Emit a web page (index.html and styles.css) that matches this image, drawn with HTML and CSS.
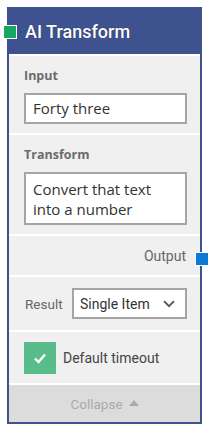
FILE: index.html
```html
<!DOCTYPE html>
<html>
<head>
<meta charset="utf-8">
<link rel="stylesheet" href="styles.css">
</head>
<body>
<div class="node">
  <span class="port port-in"></span>
  <div class="header">AI Transform</div>
  <div class="section field">
    <div class="label">Input</div>
    <div class="box box-input">Forty three</div>
  </div>
  <div class="section field">
    <div class="label">Transform</div>
    <div class="box box-area">Convert that text into a number</div>
  </div>
  <div class="section output">
    <span>Output</span>
    <span class="port port-out"></span>
  </div>
  <div class="section result">
    <span class="result-label">Result</span>
    <div class="select">
      <span>Single Item</span>
      <svg class="chev" width="12" height="8" viewBox="0 0 12 8"><path d="M1 1.2 L6 6.2 L11 1.2" fill="none" stroke="#555" stroke-width="1.8"/></svg>
    </div>
  </div>
  <div class="section check">
    <span class="checkbox"><svg width="14" height="12" viewBox="0 0 14 12"><path d="M2 6.5 L5.5 10 L12 2.5" fill="none" stroke="#fff" stroke-width="2.4"/></svg></span>
    <span class="check-label">Default timeout</span>
  </div>
  <div class="footer">Collapse <span class="tri"></span></div>
</div>
</body>
</html>
```
FILE: styles.css
```css
html, body {
  margin: 0;
  padding: 0;
  background: #fff;
}
body {
  width: 209px;
  height: 430px;
  overflow: hidden;
}
.node {
  position: relative;
  margin: 7px 0 0 7px;
  width: 191px;
  border: 2px solid #3e5290;
  background: #f0f0f0;
}
.header {
  height: 45px;
  background: #3e5290;
  color: #fff;
  font-family: Roboto, sans-serif;
  font-weight: 500;
  font-size: 18px;
  line-height: 45px;
  padding-left: 16px;
  margin-top: -2px;
  padding-top: 2px;
  text-shadow: 0 0 1px rgba(0,0,0,0.5);
}
.port {
  position: absolute;
  width: 12px;
  height: 12px;
  border: 1px solid #fff;
}
.port-in {
  left: -6px;
  top: 16px;
  background: #16a862;
}
.section {
  border-top: 2px solid #fff;
}
.field {
  padding: 9px 13px 9px 15px;
}
.label {
  font-family: "Open Sans", sans-serif;
  font-weight: 700;
  font-size: 12.5px;
  color: #6b6b6b;
  line-height: 22px;
  margin-bottom: 6px;
}
.box {
  background: #fff;
  border: 2px solid #a4a4a4;
  font-family: "Open Sans", sans-serif;
  font-size: 15px;
  color: #333;
  padding: 0 8px 0 7px;
}
.box-input {
  height: 27px;
  line-height: 27px;
}
.box-area {
  height: 44px;
  line-height: 20px;
  padding-top: 5px;
}
.output {
  position: relative;
  height: 39px;
  display: flex;
  align-items: center;
  justify-content: flex-end;
  padding-right: 14px;
  font-family: Roboto, sans-serif;
  font-size: 14px;
  color: #666;
}
.port-out {
  right: -9px;
  top: 16px;
  background: #0a7ad6;
}
.result {
  height: 53px;
  display: flex;
  align-items: center;
  padding-left: 16px;
  font-family: Roboto, sans-serif;
  font-size: 13.5px;
  color: #666;
}
.result-label {
  width: 47px;
}
.select {
  height: 27px;
  border: 2px solid #a4a4a4;
  background: #fff;
  display: flex;
  align-items: center;
  justify-content: space-between;
  padding: 0 10px 0 6px;
  width: 95px;
  font-size: 14px;
  color: #333;
}
.check {
  height: 51px;
  display: flex;
  align-items: center;
  padding-left: 15px;
}
.checkbox {
  width: 32px;
  height: 32px;
  background: #58bd8a;
  display: flex;
  align-items: center;
  justify-content: center;
}
.check-label {
  margin-left: 7px;
  font-family: Roboto, sans-serif;
  font-size: 14px;
  color: #444;
}
.footer {
  border-top: 2px solid #fff;
  height: 37px;
  background: #dcdcdc;
  display: flex;
  align-items: center;
  justify-content: center;
  gap: 6px;
  font-family: Roboto, sans-serif;
  font-size: 13.5px;
  color: #aaa;
}
.tri {
  width: 0;
  height: 0;
  border-left: 5px solid transparent;
  border-right: 5px solid transparent;
  border-bottom: 6px solid #aaa;
  margin-top: -2px;
}
```
